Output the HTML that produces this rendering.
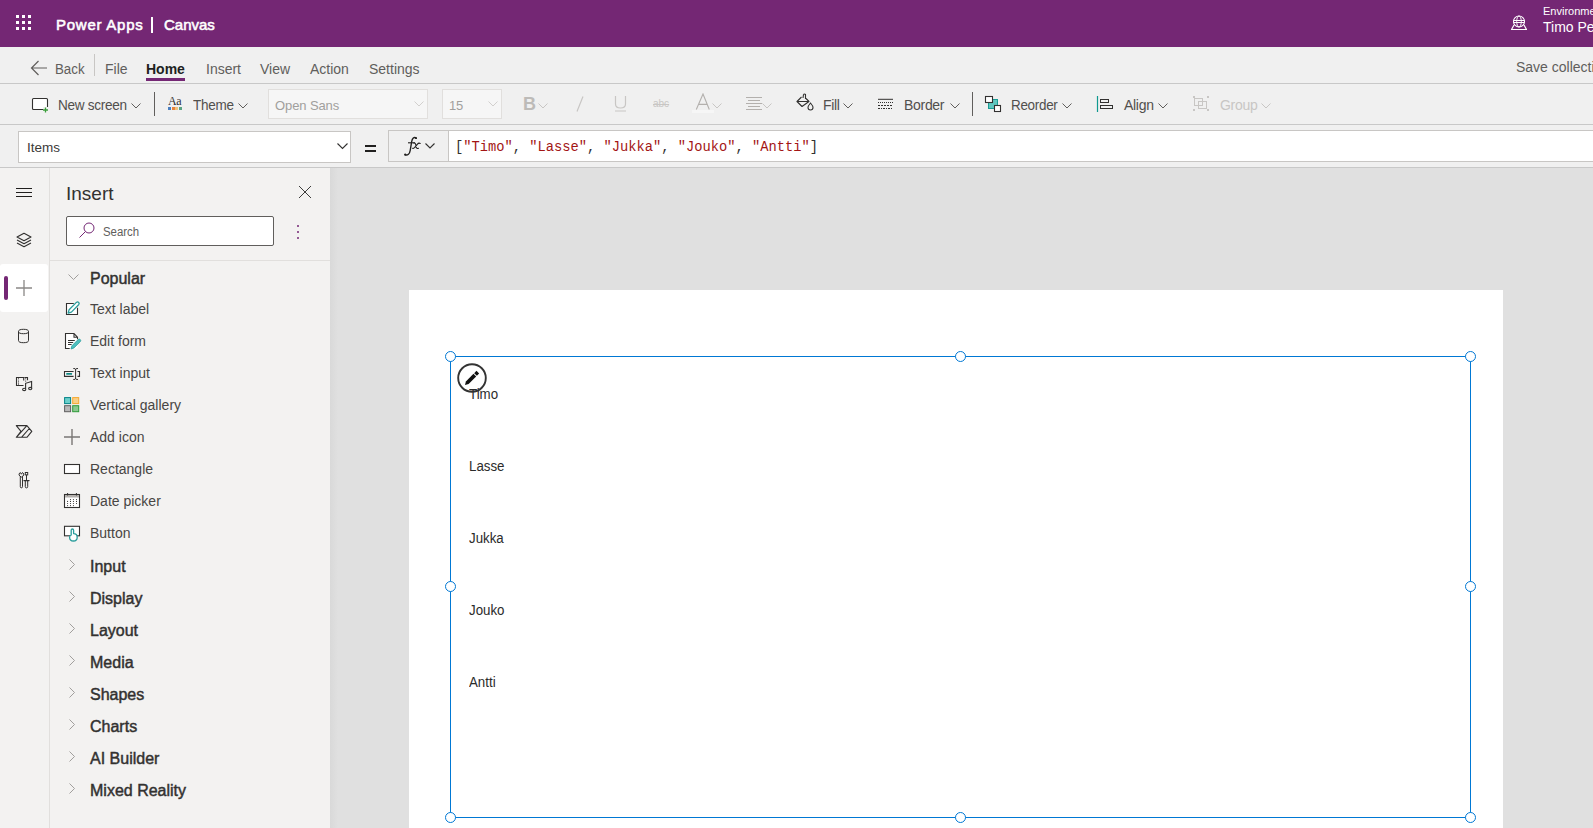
<!DOCTYPE html>
<html><head><meta charset="utf-8">
<style>
*{box-sizing:border-box;margin:0;padding:0}
html,body{width:1593px;height:828px;overflow:hidden;background:#dfdfdf;font-family:"Liberation Sans",sans-serif;color:#323130}
.a{position:absolute;white-space:nowrap}
#hdr{position:absolute;left:0;top:0;width:1593px;height:47px;background:#742774}
#menu{position:absolute;left:0;top:47px;width:1593px;height:37px;background:#f0f0f0;border-bottom:1px solid #c8c8c8}
#tool{position:absolute;left:0;top:84px;width:1593px;height:41px;background:#f0f0f0;border-bottom:1px solid #c8c8c8}
#fbar{position:absolute;left:0;top:125px;width:1593px;height:43px;background:#f0f0f0;border-bottom:1px solid #c8c8c8}
#rail{position:absolute;left:0;top:168px;width:50px;height:660px;background:#f3f2f1;border-right:1px solid #e1dfdd}
#panel{position:absolute;left:50px;top:168px;width:280px;height:660px;background:#f3f2f1}
#canvas{position:absolute;left:330px;top:168px;width:1263px;height:660px;background:#e0e0e0}
.mt{font-size:14px;color:#605e5c}
.tt{font-size:14px;color:#514f4d;letter-spacing:-0.3px}
.dis{color:#c8c6c4}
.pi{font-size:14px;color:#484644}
.ph{font-size:16px;font-weight:normal;color:#323130;-webkit-text-stroke:0.45px #323130}
.gi{font-size:14px;color:#2b2b2b;transform:scaleX(0.95);transform-origin:0 0}
</style></head><body>
<div id="hdr">
  <svg class="a" style="left:15px;top:14px" width="18" height="18" viewBox="0 0 18 18" fill="#fff">
    <rect x="1" y="1" width="3" height="3"/><rect x="7" y="1" width="3" height="3"/><rect x="13" y="1" width="3" height="3"/>
    <rect x="1" y="7" width="3" height="3"/><rect x="7" y="7" width="3" height="3"/><rect x="13" y="7" width="3" height="3"/>
    <rect x="1" y="13" width="3" height="3"/><rect x="7" y="13" width="3" height="3"/><rect x="13" y="13" width="3" height="3"/>
  </svg>
  <div class="a" style="left:56px;top:15.5px;font-size:15px;font-weight:normal;color:#fff;-webkit-text-stroke:0.55px #fff;letter-spacing:0.75px">Power Apps</div>
  <div class="a" style="left:151px;top:17px;width:2px;height:16px;background:#fff"></div>
  <div class="a" style="left:164px;top:15.5px;font-size:15px;font-weight:normal;color:#fff;-webkit-text-stroke:0.55px #fff;letter-spacing:0px">Canvas</div>
  <div class="a" style="left:1543px;top:5px;font-size:11px;color:#fff">Environment</div>
  <div class="a" style="left:1543px;top:19px;font-size:14px;color:#fff">Timo Pekkala</div>
  <svg class="a" style="left:1510px;top:15px" width="18" height="16" viewBox="0 0 18 16"><circle cx="9" cy="6.5" r="5.5" fill="none" stroke="#fff" stroke-width="1.1"/><ellipse cx="9" cy="6.5" rx="2.3" ry="5.5" fill="none" stroke="#fff" stroke-width="1"/><path d="M3.5 5.5 H14.5 M3.5 7.5 H14.5" stroke="#fff" stroke-width="1"/><path d="M4 10 L1.5 14.5 H16.5 L14 10" fill="none" stroke="#fff" stroke-width="1.2" stroke-linejoin="round"/></svg>
</div>
<div id="menu">
  <svg class="a" style="left:30px;top:13px" width="18" height="16" viewBox="0 0 18 16"><path d="M8.5 1 L1.5 8 L8.5 15 M1.5 8 H17" stroke="#605e5c" stroke-width="1.2" fill="none"/></svg>
  <div class="a mt" style="left:55px;top:14px;transform:scaleX(0.95);transform-origin:0 0">Back</div>
  <div class="a" style="left:94px;top:7px;width:1px;height:22px;background:#c8c6c4"></div>
  <div class="a mt" style="left:105px;top:14px">File</div>
  <div class="a mt" style="left:146px;top:14px;color:#201f1e;font-weight:bold">Home</div>
  <div class="a" style="left:146px;top:31px;width:39px;height:3px;background:#742774"></div>
  <div class="a mt" style="left:206px;top:14px">Insert</div>
  <div class="a mt" style="left:260px;top:14px">View</div>
  <div class="a mt" style="left:310px;top:14px">Action</div>
  <div class="a mt" style="left:369px;top:14px">Settings</div>
  <div class="a mt" style="left:1516px;top:12px">Save collections</div>
</div>
<div id="tool">
  <svg class="a" style="left:31px;top:13px" width="20" height="16" viewBox="0 0 20 16"><rect x="1.5" y="1.5" width="15" height="11" rx="1" fill="#fff" stroke="#323130" stroke-width="1.1"/><rect x="12" y="10" width="6" height="5" fill="#f0f0f0"/><path d="M14.5 10.5 V15.5 M12 13 H17" stroke="#3a9f3a" stroke-width="1.3"/></svg>
  <div class="a tt" style="left:58px;top:13px;transform:scaleX(0.97);transform-origin:0 0">New screen</div>
  <svg class="a" style="left:131px;top:19px" width="10" height="6" viewBox="0 0 10 6"><path d="M0.5 0.5 L5 5 L9.5 0.5" stroke="#605e5c" stroke-width="1" fill="none"/></svg>
  <div class="a" style="left:154px;top:8px;width:1px;height:24px;background:#605e5c"></div>
  <div class="a" style="left:168px;top:10px;font-family:'Liberation Serif',serif;font-size:12px;color:#323130;letter-spacing:-0.5px">Aa</div>
  <div class="a" style="left:168px;top:23px;width:3px;height:3px;background:#4a7fc1"></div>
  <div class="a" style="left:171.5px;top:23px;width:3px;height:3px;background:#e8833a"></div>
  <div class="a" style="left:175px;top:23px;width:3px;height:3px;background:#f0c27a"></div>
  <div class="a" style="left:178.5px;top:23px;width:3px;height:3px;background:#5aa383"></div>
  <div class="a tt" style="left:193px;top:13px;transform:scaleX(0.965);transform-origin:0 0">Theme</div>
  <svg class="a" style="left:238px;top:19px" width="10" height="6" viewBox="0 0 10 6"><path d="M0.5 0.5 L5 5 L9.5 0.5" stroke="#605e5c" stroke-width="1" fill="none"/></svg>
  <div class="a" style="left:268px;top:5px;width:160px;height:30px;border:1px solid #e1dfdd;background:#f6f6f6"></div>
  <div class="a tt" style="left:275px;top:14px;color:#a19f9d;font-size:13px;letter-spacing:-0.1px">Open Sans</div>
  <svg class="a" style="left:414px;top:17px" width="10" height="6" viewBox="0 0 10 6"><path d="M0.5 0.5 L5 5 L9.5 0.5" stroke="#d2d0ce" stroke-width="1" fill="none"/></svg>
  <div class="a" style="left:442px;top:5px;width:60px;height:30px;border:1px solid #e1dfdd;background:#f6f6f6"></div>
  <div class="a tt" style="left:449px;top:14px;color:#a19f9d;font-size:13px">15</div>
  <svg class="a" style="left:488px;top:17px" width="10" height="6" viewBox="0 0 10 6"><path d="M0.5 0.5 L5 5 L9.5 0.5" stroke="#d2d0ce" stroke-width="1" fill="none"/></svg>
  <div class="a" style="left:523px;top:10px;font-size:18px;font-weight:bold;color:#bdbbb8">B</div>
  <svg class="a" style="left:538px;top:19px" width="10" height="6" viewBox="0 0 10 6"><path d="M0.5 0.5 L5 5 L9.5 0.5" stroke="#c8c6c4" stroke-width="1" fill="none"/></svg>
  <svg class="a" style="left:576px;top:12px" width="8" height="16" viewBox="0 0 8 16"><path d="M7 0.5 L1 15.5" stroke="#c8c6c4" stroke-width="1.2"/></svg>
  <svg class="a" style="left:614px;top:11px" width="13" height="17" viewBox="0 0 13 17"><path d="M1.5 1 V9 Q1.5 13 6.5 13 Q11.5 13 11.5 9 V1 M1 16 H12" stroke="#c8c6c4" stroke-width="1.2" fill="none"/></svg>
  <div class="a" style="left:653px;top:14px;font-size:10px;color:#c8c6c4;text-decoration:line-through">abc</div>
  <div class="a" style="left:692px;top:26px;width:22px;height:3px;background:#f6f6f6"></div>
  <svg class="a" style="left:694px;top:9px" width="18" height="18" viewBox="0 0 18 18"><path d="M2.3 16.5 L9 1 L15.3 16.5 M4.8 11.4 H12.8" stroke="#b3b0ad" stroke-width="1.1" fill="none"/></svg>
  <svg class="a" style="left:712px;top:19px" width="10" height="6" viewBox="0 0 10 6"><path d="M0.5 0.5 L5 5 L9.5 0.5" stroke="#c8c6c4" stroke-width="1" fill="none"/></svg>
  <svg class="a" style="left:745px;top:12px" width="18" height="16" viewBox="0 0 18 16"><path d="M1 1.5 H17 M3 4.5 H15 M1 7.5 H17 M3 10.5 H15 M1 13.5 H17" stroke="#b3b0ad" stroke-width="1"/></svg>
  <svg class="a" style="left:762px;top:19px" width="10" height="6" viewBox="0 0 10 6"><path d="M0.5 0.5 L5 5 L9.5 0.5" stroke="#c8c6c4" stroke-width="1" fill="none"/></svg>
  <svg class="a" style="left:796px;top:9px" width="19" height="18" viewBox="0 0 19 18"><path d="M7.5 1.5 Q8.5 0.5 9.5 1.5 L9.5 6 M7 5 L7.5 1.5 M5.5 4 L1 8.5 L6 13.5 L13 8.5 L10 5.5 M1 8.5 H13" stroke="#323130" stroke-width="1.1" fill="none" stroke-linejoin="round"/><path d="M14.5 10 Q17 13 17 14.5 A2.5 2.5 0 0 1 12 14.5 Q12 13 14.5 10Z" stroke="#323130" stroke-width="1.1" fill="none"/></svg>
  <div class="a tt" style="left:823px;top:13px">Fill</div>
  <svg class="a" style="left:843px;top:19px" width="10" height="6" viewBox="0 0 10 6"><path d="M0.5 0.5 L5 5 L9.5 0.5" stroke="#605e5c" stroke-width="1" fill="none"/></svg>
  <svg class="a" style="left:877px;top:14px" width="17" height="11" viewBox="0 0 17 11"><path d="M1 1.3 H16" stroke="#323130" stroke-width="1"/><path d="M1 4.5 H16" stroke="#323130" stroke-width="1" stroke-dasharray="1 1"/><path d="M1 7.5 H16" stroke="#323130" stroke-width="1" stroke-dasharray="2 1"/><path d="M1 10.5 H16" stroke="#323130" stroke-width="1" stroke-dasharray="2 1 1 1"/></svg>
  <div class="a tt" style="left:904px;top:13px">Border</div>
  <svg class="a" style="left:950px;top:19px" width="10" height="6" viewBox="0 0 10 6"><path d="M0.5 0.5 L5 5 L9.5 0.5" stroke="#605e5c" stroke-width="1" fill="none"/></svg>
  <div class="a" style="left:972px;top:8px;width:1px;height:24px;background:#605e5c"></div>
  <svg class="a" style="left:984px;top:11px" width="19" height="18" viewBox="0 0 19 18"><rect x="4.5" y="4.5" width="9" height="9" fill="#5fc7c0" stroke="#1a9c94" stroke-width="1"/><rect x="1.5" y="1.5" width="7" height="6" fill="#fff" stroke="#323130" stroke-width="1.1"/><rect x="10.5" y="10.5" width="6" height="6" fill="#fff" stroke="#323130" stroke-width="1.1"/></svg>
  <div class="a tt" style="left:1011px;top:13px;transform:scaleX(0.96);transform-origin:0 0">Reorder</div>
  <svg class="a" style="left:1062px;top:19px" width="10" height="6" viewBox="0 0 10 6"><path d="M0.5 0.5 L5 5 L9.5 0.5" stroke="#605e5c" stroke-width="1" fill="none"/></svg>
  <svg class="a" style="left:1096px;top:11px" width="18" height="17" viewBox="0 0 18 17"><path d="M1.5 1 V17" stroke="#0f9990" stroke-width="1.2"/><rect x="4.5" y="4.5" width="8" height="3" fill="none" stroke="#323130" stroke-width="1"/><rect x="4.5" y="10.5" width="12" height="3" fill="none" stroke="#323130" stroke-width="1"/></svg>
  <div class="a tt" style="left:1124px;top:13px">Align</div>
  <svg class="a" style="left:1158px;top:19px" width="10" height="6" viewBox="0 0 10 6"><path d="M0.5 0.5 L5 5 L9.5 0.5" stroke="#605e5c" stroke-width="1" fill="none"/></svg>
  <svg class="a" style="left:1192px;top:11px" width="18" height="17" viewBox="0 0 18 17"><g fill="#c8c6c4"><rect x="1" y="1" width="2" height="2"/><rect x="15" y="1" width="2" height="2"/><rect x="1" y="14" width="2" height="2"/><rect x="15" y="14" width="2" height="2"/></g><rect x="2.5" y="3.5" width="8" height="7" fill="none" stroke="#c8c6c4"/><rect x="6.5" y="6.5" width="8" height="7" fill="none" stroke="#c8c6c4"/></svg>
  <div class="a tt" style="left:1220px;top:13px;color:#c8c6c4">Group</div>
  <svg class="a" style="left:1261px;top:19px" width="10" height="6" viewBox="0 0 10 6"><path d="M0.5 0.5 L5 5 L9.5 0.5" stroke="#c8c6c4" stroke-width="1" fill="none"/></svg>
</div>
<div id="fbar">
  <div class="a" style="left:18px;top:6px;width:333px;height:32px;background:#fff;border:1px solid #c8c6c4"></div>
  <div class="a" style="left:27px;top:15px;font-size:13.5px;color:#3b3a39">Items</div>
  <svg class="a" style="left:337px;top:18px" width="11" height="7" viewBox="0 0 11 7"><path d="M0.5 0.5 L5.5 5.5 L10.5 0.5" stroke="#323130" stroke-width="1.1" fill="none"/></svg>
  <div class="a" style="left:365px;top:20px;width:11px;height:2px;background:#201f1e"></div>
  <div class="a" style="left:365px;top:25px;width:11px;height:2px;background:#201f1e"></div>
  <div class="a" style="left:388px;top:5px;width:1300px;height:32px;background:#fff;border:1px solid #c8c6c4"></div>
  <div class="a" style="left:389px;top:6px;width:60px;height:30px;background:#f0f0f0;border-right:1px solid #c8c6c4"></div>
  <svg class="a" style="left:400px;top:9px" width="24" height="24" viewBox="0 0 24 24"><path d="M16.3 4.2 C14 2.2 12.2 4.5 11.7 7.5 L10.2 16.5 C9.6 20 7.8 21.5 5 20.8" stroke="#201f1e" stroke-width="1.4" fill="none" stroke-linecap="round"/><circle cx="15.9" cy="4.1" r="1" fill="#201f1e"/><circle cx="5.2" cy="20.6" r="1" fill="#201f1e"/><path d="M8 8.8 H15" stroke="#201f1e" stroke-width="1.1"/><path d="M13.8 9 Q15.2 8.6 15.7 10.5 L16.3 13.3 Q16.6 14.8 18.5 14.3 M20.2 9.5 Q18.8 8.4 17.3 10.3 L14.8 13.3 Q13.8 14.7 12.6 14.3" stroke="#201f1e" stroke-width="1.1" fill="none" stroke-linecap="round"/></svg>
  <svg class="a" style="left:425px;top:18px" width="10" height="6" viewBox="0 0 10 6"><path d="M0.5 0.5 L5 5 L9.5 0.5" stroke="#323130" stroke-width="1.1" fill="none"/></svg>
  <div class="a" style="left:455px;top:13px;font-family:'Liberation Mono',monospace;font-size:15.2px;transform:scaleX(0.905);transform-origin:0 0;color:#323130">[<span style="color:#a31515">"Timo"</span>, <span style="color:#a31515">"Lasse"</span>, <span style="color:#a31515">"Jukka"</span>, <span style="color:#a31515">"Jouko"</span>, <span style="color:#a31515">"Antti"</span>]</div>
</div>
<div id="rail">
  <svg class="a" style="left:15px;top:19px" width="18" height="11" viewBox="0 0 18 11"><path d="M1 1.5 H17 M1 5.5 H17 M1 9.5 H17" stroke="#201f1e" stroke-width="1"/></svg>
  <svg class="a" style="left:16px;top:64px" width="17" height="16" viewBox="0 0 17 16"><path d="M8 1.2 L15 5 L8 8.8 L1 5Z M1 8 L8 11.8 L15 8 M1 11 L8 14.8 L15 11" stroke="#323130" stroke-width="1.1" fill="none" stroke-linejoin="round"/></svg>
  <div class="a" style="left:0;top:96px;width:48px;height:48px;background:#fff;border-radius:3px"></div>
  <div class="a" style="left:4px;top:108px;width:4px;height:24px;background:#742774;border-radius:2px"></div>
  <svg class="a" style="left:16px;top:112px" width="17" height="17" viewBox="0 0 17 17"><path d="M8 0 V16 M0 8 H16" stroke="#8a8886" stroke-width="1.3"/></svg>
  <svg class="a" style="left:17px;top:160px" width="14" height="16" viewBox="0 0 14 16"><ellipse cx="6.5" cy="3.5" rx="5" ry="2.2" fill="none" stroke="#323130" stroke-width="1"/><path d="M1.5 3.5 V12.5 A5 2.2 0 0 0 11.5 12.5 V3.5" fill="none" stroke="#323130" stroke-width="1"/></svg>
  <svg class="a" style="left:14px;top:208px" width="20" height="18" viewBox="0 0 20 18"><path d="M9.7 4.6 V1.5 H2.5 V9.5 H9.5" stroke="#323130" stroke-width="1.1" fill="none"/><path d="M10.4 1.5 H13.5 V4.3" stroke="#323130" stroke-width="1.1" fill="none"/><g fill="#323130"><rect x="4" y="2.3" width="1" height="1"/><rect x="4" y="4.6" width="1" height="1"/><rect x="4" y="6.6" width="1" height="1"/><rect x="4" y="8.4" width="1" height="1"/><rect x="11.2" y="2.3" width="1" height="1"/><rect x="11.2" y="4.6" width="1" height="1"/></g><path d="M11.6 13 V7.3 L17.6 5.5 V12.3" stroke="#323130" stroke-width="1.1" fill="none"/><ellipse cx="10.2" cy="13.4" rx="1.6" ry="1.2" fill="none" stroke="#323130" stroke-width="1.1"/><ellipse cx="16.2" cy="12.6" rx="1.6" ry="1.2" fill="none" stroke="#323130" stroke-width="1.1"/></svg>
  <svg class="a" style="left:15px;top:256px" width="18" height="15" viewBox="0 0 18 15"><path d="M1.3 1.6 H11.9 L16.8 7.4 L11.9 13.3 H1.3 L6 7.4 Z M11.9 1.6 L1.3 13.3 M14.3 4.5 L6.5 13.3" stroke="#323130" stroke-width="1.1" fill="none" stroke-linejoin="round"/></svg>
  <svg class="a" style="left:18px;top:303px" width="13" height="18" viewBox="0 0 13 18"><path d="M2.3 1.5 A2.3 2.3 0 1 0 4.5 1.5 L3.4 3.2 Z" stroke="#323130" stroke-width="1" fill="none" stroke-linejoin="round"/><path d="M2.3 5.5 V15.7 A1.1 1.1 0 0 0 4.5 15.7 V5.5" stroke="#323130" stroke-width="1" fill="none"/><rect x="7.3" y="1.5" width="2.4" height="2.4" stroke="#323130" stroke-width="1" fill="none"/><path d="M8.5 3.9 V9.5" stroke="#323130" stroke-width="1"/><path d="M6 9.6 H11" stroke="#323130" stroke-width="1.4" stroke-linecap="round"/><path d="M7.3 9.6 V15.7 A1.2 1.2 0 0 0 9.7 15.7 V9.6" stroke="#323130" stroke-width="1" fill="none"/></svg>
</div>
<div id="panel">
<div class="a" style="left:16px;top:15px;font-size:19px;color:#323130">Insert</div>
<svg class="a" style="left:248px;top:17px" width="14" height="14" viewBox="0 0 14 14"><path d="M1 1 L13 13 M13 1 L1 13" stroke="#323130" stroke-width="0.95"/></svg>
<div class="a" style="left:16px;top:48px;width:208px;height:30px;background:#fff;border:1px solid #605e5c;border-radius:2px"></div>
<svg class="a" style="left:28px;top:54px" width="18" height="18" viewBox="0 0 18 18"><circle cx="11" cy="6" r="5" fill="none" stroke="#742774" stroke-width="1"/><path d="M7.5 9.5 L1.5 15.5" stroke="#742774" stroke-width="1"/></svg>
<div class="a" style="left:53px;top:57px;font-size:12px;color:#605e5c;transform:scaleX(0.95);transform-origin:0 0">Search</div>
<svg class="a" style="left:246px;top:56px" width="4" height="16" viewBox="0 0 4 16"><g fill="#742774"><circle cx="2" cy="2" r="1"/><circle cx="2" cy="8" r="1"/><circle cx="2" cy="14" r="1"/></g></svg>
<div class="a" style="left:0;top:92px;width:280px;height:1px;background:#e1dfdd"></div>
<svg class="a" style="left:18px;top:106px" width="11" height="7" viewBox="0 0 11 7"><path d="M0.5 0.5 L5.5 5.5 L10.5 0.5" stroke="#a19f9d" stroke-width="1" fill="none"/></svg>
<div class="a ph" style="left:40px;top:102px">Popular</div>
<svg class="a" style="left:12px;top:131px" width="20" height="20" viewBox="0 0 20 20"><rect x="4.5" y="4.5" width="11" height="11" fill="#fff"/><path d="M11.8 4.5 H4.5 V15.5 H15.5 V8.8" stroke="#323130" stroke-width="1.1" fill="none"/><path d="M6.2 14 L7.1 10.7 L14.4 3.4 Q15.6 2.4 16.7 3.5 Q17.7 4.6 16.6 5.8 L9.4 13.1 Z" fill="#fff" stroke="#2a9d9c" stroke-width="1.3" stroke-linejoin="round"/></svg>
<svg class="a" style="left:12px;top:163px" width="20" height="20" viewBox="0 0 20 20"><path d="M3.5 2.5 H12 L15.5 6.3 V17.5 H3.5Z" fill="#fff"/><path d="M7.7 17.5 H3.5 V2.5 H12 L15.5 6.3 V8.3 M12 2.5 V6.3 H15.5" stroke="#323130" stroke-width="1.1" fill="none"/><path d="M6 9.5 H12.8 M6 11.5 H11.2 M6 13.5 H9.6" stroke="#323130" stroke-width="1"/><path d="M9 18 L9.9 14.8 L16.2 8.5 Q17.3 7.6 18.3 8.6 Q19.2 9.6 18.3 10.6 L12 16.9 Z" fill="#4fc0bf" stroke="#2a9d9c" stroke-width="0.8"/></svg>
<svg class="a" style="left:12px;top:195px" width="20" height="20" viewBox="0 0 20 20"><path d="M3 10.5 H11.6 V13.5 H3Z" fill="#fff"/><path d="M11.6 8.5 H2.5 V13.4 H11.6 M15.5 8.5 H17.5 V13.4 H15.5" stroke="#323130" stroke-width="1.1" fill="none"/><path d="M5 10.9 H9.3" stroke="#0e8a85" stroke-width="1.8" stroke-linecap="round"/><path d="M13.6 6 V16 M11.3 5.5 Q13.6 5.3 13.6 6.5 Q13.6 5.3 16 5.5 M11.3 16.5 Q13.6 16.7 13.6 15.5 Q13.6 16.7 16 16.5" stroke="#323130" stroke-width="1" fill="none"/></svg>
<svg class="a" style="left:12px;top:227px" width="20" height="20" viewBox="0 0 20 20"><rect x="2.6" y="2.6" width="6" height="6" fill="#6ccfcb" stroke="#038387" stroke-width="1"/><rect x="10.7" y="2.6" width="6" height="6" fill="#f8d08a" stroke="#f7a830" stroke-width="1"/><rect x="2.6" y="10.7" width="6" height="6" fill="#b8b8b8" stroke="#5f5f5f" stroke-width="1"/><rect x="10.7" y="10.7" width="6" height="6" fill="#8cc88f" stroke="#2e9a3a" stroke-width="1"/></svg>
<svg class="a" style="left:12px;top:259px" width="20" height="20" viewBox="0 0 20 20"><path d="M10 2 V18 M2 10 H18" stroke="#797775" stroke-width="1.4"/></svg>
<svg class="a" style="left:12px;top:291px" width="20" height="20" viewBox="0 0 20 20"><rect x="2.5" y="5.5" width="15" height="9" fill="#fff" stroke="#323130" stroke-width="1.1"/></svg>
<svg class="a" style="left:12px;top:323px" width="20" height="20" viewBox="0 0 20 20"><rect x="2.5" y="3.5" width="15" height="13" fill="#fff" stroke="#323130" stroke-width="1.1"/><rect x="3" y="4" width="14" height="2.5" fill="#b3b0ad"/><path d="M5.6 2 V4.5 M14.4 2 V4.5" stroke="#323130" stroke-width="1"/><g fill="#323130"><circle cx="8.5" cy="8.5" r="0.55"/><circle cx="11.4" cy="8.5" r="0.55"/><circle cx="14.5" cy="8.5" r="0.55"/><circle cx="5.6" cy="10.4" r="0.55"/><circle cx="8.5" cy="10.4" r="0.55"/><circle cx="11.4" cy="10.4" r="0.55"/><circle cx="14.5" cy="10.4" r="0.55"/><circle cx="5.6" cy="12.5" r="0.55"/><circle cx="8.5" cy="12.5" r="0.55"/><circle cx="11.4" cy="12.5" r="0.55"/><circle cx="14.5" cy="12.5" r="0.55"/><circle cx="5.6" cy="14.6" r="0.55"/><circle cx="8.5" cy="14.6" r="0.55"/><circle cx="11.4" cy="14.6" r="0.55"/></g></svg>
<svg class="a" style="left:12px;top:355px" width="20" height="20" viewBox="0 0 20 20"><rect x="2.5" y="3.3" width="15" height="9.5" fill="#fff" stroke="#323130" stroke-width="1.1"/><path d="M9.2 12.5 V7.3 Q9.2 6 10.4 6 Q11.6 6 11.6 7.3 V10.6 Q15.2 10.6 15.2 14.2 Q15.2 18 11.4 18 Q7.6 18 7.6 14.2 Q7.6 12.6 9.2 12" fill="#fff" stroke="#2a9d9c" stroke-width="1.3" stroke-linejoin="round"/></svg>
<div class="a pi" style="left:40px;top:133px">Text label</div>
<div class="a pi" style="left:40px;top:165px">Edit form</div>
<div class="a pi" style="left:40px;top:197px">Text input</div>
<div class="a pi" style="left:40px;top:229px">Vertical gallery</div>
<div class="a pi" style="left:40px;top:261px">Add icon</div>
<div class="a pi" style="left:40px;top:293px">Rectangle</div>
<div class="a pi" style="left:40px;top:325px">Date picker</div>
<div class="a pi" style="left:40px;top:357px">Button</div>
<svg class="a" style="left:19px;top:391px" width="7" height="11" viewBox="0 0 7 11"><path d="M0.5 0.5 L5.5 5.5 L0.5 10.5" stroke="#a19f9d" stroke-width="1" fill="none"/></svg>
<div class="a ph" style="left:40px;top:390px">Input</div>
<svg class="a" style="left:19px;top:423px" width="7" height="11" viewBox="0 0 7 11"><path d="M0.5 0.5 L5.5 5.5 L0.5 10.5" stroke="#a19f9d" stroke-width="1" fill="none"/></svg>
<div class="a ph" style="left:40px;top:422px">Display</div>
<svg class="a" style="left:19px;top:455px" width="7" height="11" viewBox="0 0 7 11"><path d="M0.5 0.5 L5.5 5.5 L0.5 10.5" stroke="#a19f9d" stroke-width="1" fill="none"/></svg>
<div class="a ph" style="left:40px;top:454px">Layout</div>
<svg class="a" style="left:19px;top:487px" width="7" height="11" viewBox="0 0 7 11"><path d="M0.5 0.5 L5.5 5.5 L0.5 10.5" stroke="#a19f9d" stroke-width="1" fill="none"/></svg>
<div class="a ph" style="left:40px;top:486px">Media</div>
<svg class="a" style="left:19px;top:519px" width="7" height="11" viewBox="0 0 7 11"><path d="M0.5 0.5 L5.5 5.5 L0.5 10.5" stroke="#a19f9d" stroke-width="1" fill="none"/></svg>
<div class="a ph" style="left:40px;top:518px">Shapes</div>
<svg class="a" style="left:19px;top:551px" width="7" height="11" viewBox="0 0 7 11"><path d="M0.5 0.5 L5.5 5.5 L0.5 10.5" stroke="#a19f9d" stroke-width="1" fill="none"/></svg>
<div class="a ph" style="left:40px;top:550px">Charts</div>
<svg class="a" style="left:19px;top:583px" width="7" height="11" viewBox="0 0 7 11"><path d="M0.5 0.5 L5.5 5.5 L0.5 10.5" stroke="#a19f9d" stroke-width="1" fill="none"/></svg>
<div class="a ph" style="left:40px;top:582px">AI Builder</div>
<svg class="a" style="left:19px;top:615px" width="7" height="11" viewBox="0 0 7 11"><path d="M0.5 0.5 L5.5 5.5 L0.5 10.5" stroke="#a19f9d" stroke-width="1" fill="none"/></svg>
<div class="a ph" style="left:40px;top:614px">Mixed Reality</div>
</div>
<div id="canvas">
<div class="a" style="left:0;top:0;width:8px;height:660px;background:linear-gradient(to right,#d9d9d9,#e0e0e0)"></div>
<div class="a" style="left:79px;top:122px;width:1094px;height:540px;background:#fff"></div>
<div class="a gi" style="left:139px;top:218px">Timo</div>
<div class="a gi" style="left:139px;top:290px">Lasse</div>
<div class="a gi" style="left:139px;top:362px">Jukka</div>
<div class="a gi" style="left:139px;top:434px">Jouko</div>
<div class="a gi" style="left:139px;top:506px">Antti</div>
<div class="a" style="left:120px;top:188px;width:1021px;height:462px;border:1px solid #0078d4"></div>
<div class="a" style="left:115.0px;top:183.0px;width:11px;height:11px;border:1.6px solid #0078d4;border-radius:50%;background:#fff"></div>
<div class="a" style="left:115.0px;top:413.0px;width:11px;height:11px;border:1.6px solid #0078d4;border-radius:50%;background:#fff"></div>
<div class="a" style="left:115.0px;top:644.0px;width:11px;height:11px;border:1.6px solid #0078d4;border-radius:50%;background:#fff"></div>
<div class="a" style="left:625.0px;top:183.0px;width:11px;height:11px;border:1.6px solid #0078d4;border-radius:50%;background:#fff"></div>
<div class="a" style="left:625.0px;top:644.0px;width:11px;height:11px;border:1.6px solid #0078d4;border-radius:50%;background:#fff"></div>
<div class="a" style="left:1135.0px;top:183.0px;width:11px;height:11px;border:1.6px solid #0078d4;border-radius:50%;background:#fff"></div>
<div class="a" style="left:1135.0px;top:413.0px;width:11px;height:11px;border:1.6px solid #0078d4;border-radius:50%;background:#fff"></div>
<div class="a" style="left:1135.0px;top:644.0px;width:11px;height:11px;border:1.6px solid #0078d4;border-radius:50%;background:#fff"></div>
<svg class="a" style="left:126.5px;top:194.5px" width="30" height="30" viewBox="0 0 30 30"><circle cx="15" cy="15" r="13.8" fill="none" stroke="#333" stroke-width="1.9"/><g transform="rotate(-45 14.5 15.5)"><path d="M5.3 15.5 L8.5 13.6 H19.2 V17.4 H8.5 Z" fill="#111"/><rect x="20.2" y="13.6" width="3.2" height="3.8" fill="#111"/></g></svg>
</div>
</body></html>
